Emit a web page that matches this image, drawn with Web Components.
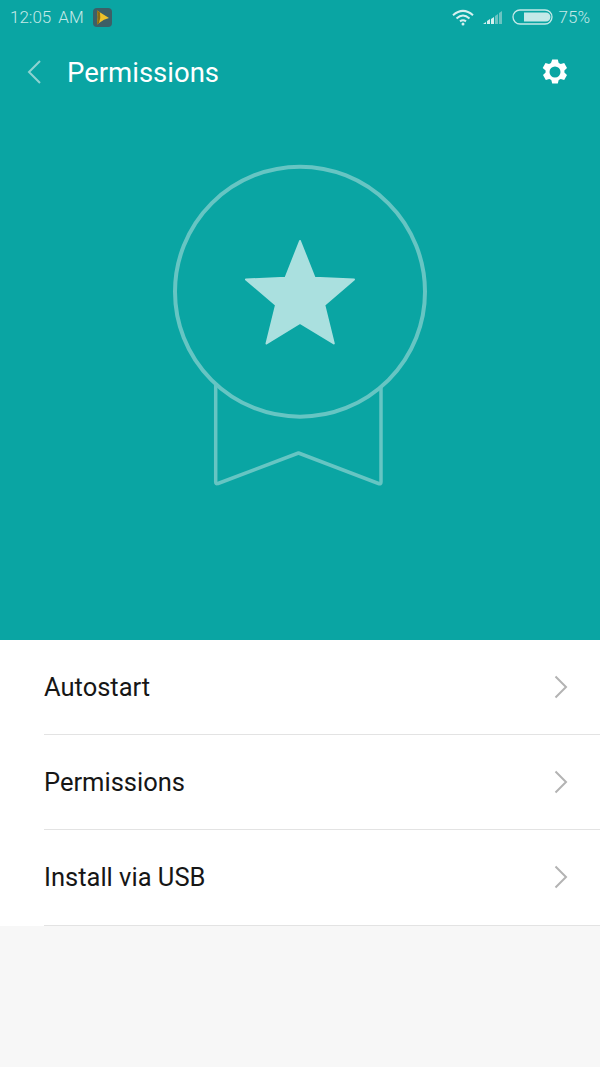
<!DOCTYPE html>
<html><head><meta charset="utf-8">
<style>
html,body{margin:0;padding:0;width:600px;height:1067px;overflow:hidden;background:#f7f7f7;font-family:Roboto,"Liberation Sans",sans-serif}
settings-page{display:block}
</style></head><body>
<settings-page>
  <hero-panel>
    <status-bar slot="status"></status-bar>
    <title-bar slot="title">Permissions</title-bar>
    <medal-art></medal-art>
  </hero-panel>
  <menu-list>
    <menu-row>Autostart</menu-row>
    <menu-row>Permissions</menu-row>
    <menu-row>Install via USB</menu-row>
  </menu-list>
</settings-page>
<script>
function def(name, html){
  customElements.define(name, class extends HTMLElement{
    constructor(){super();this.attachShadow({mode:'open'}).innerHTML=html;}
  });
}
def('settings-page','<style>:host{display:block;width:600px;height:1067px;background:#f7f7f7}</style><slot></slot>');
def('hero-panel',`<style>:host{display:flex;flex-direction:column;height:640px;background:#0aa5a3}</style><slot name="status"></slot><slot name="title"></slot><slot></slot>`);
def('status-bar',`<style>
:host{display:flex;align-items:center;height:34px;padding:0 10px;color:#c4e9e8;font:300 17px Roboto,sans-serif}
.app{margin-left:9px;width:19px;height:19px;border-radius:4px;background:#3d5f66;display:flex;align-items:center;justify-content:center}
.sp{flex:1}
.am{margin-left:7px}
.wifi{margin-right:9px}.sig{margin-right:8px}.bat{margin-right:6px}
svg{display:block}
</style>
<span>12:05</span><span class="am">AM</span>
<span class="app"><svg width="17" height="17" viewBox="0 0 17 17"><path d="M3 1.5 L15 9 Q10 10 5 14 L3 15.5 Q4.500 8 3 1.500Z" fill="#eec22a"/><path d="M3 15.500 Q4.500 8 3 1.500 L6 3.500 Q7 9 5 14Z" fill="#8a6a14"/></svg></span>
<span class="sp"></span>
<svg class="wifi" width="22" height="17" viewBox="0 0 22 17" fill="none" stroke="#d6f0ef" stroke-width="2"><path d="M1 6.200 Q11 -2.500 21 6.200"/><path d="M4.500 9.400 Q11 3.600 17.500 9.400"/><path d="M8 12.400 Q11 10 14 12.400"/><circle cx="11" cy="15" r="1.500" fill="#d6f0ef" stroke="none"/></svg>
<svg class="sig" width="21" height="17" viewBox="0 0 21 17"><path d="M0 15h3v-2zM4 15h3v-5l-3 2zM8 15h3V8L8 10z" fill="#d6f0ef"/><path d="M12 15h3V5l-3 2zM16 15h3V2l-3 2z" fill="#6cc4c2"/></svg>
<svg class="bat" width="41" height="16" viewBox="0 0 41 16"><rect x="1" y="1" width="39" height="14" rx="7" fill="none" stroke="#c4e9e8" stroke-width="1.300"/><path d="M12 3.500h22a4.500 4.500 0 0 1 0 9H12z" fill="#c4e9e8"/></svg>
<span>75%</span>`);
def('title-bar',`<style>
:host{display:flex;align-items:center;height:76px;color:#fff;font:400 27.500px Roboto,sans-serif}
.back{margin-left:27px;margin-right:26px;display:block}
.t{flex:1;margin-top:0}
.gear{margin-right:31px;display:block}
</style>
<svg class="back" width="14" height="24" viewBox="0 0 14 24" fill="none" stroke="#8fd3d1" stroke-width="2"><path d="M13 1 L2 12 L13 23"/></svg>
<span class="t"><slot></slot></span>
<svg class="gear" width="28" height="28" viewBox="0 0 28 28"><path fill="#fff" fill-rule="evenodd" d="M11.200 1.500h5.600l.9 3.500 2 1.100 3.500-1 2.800 4.800-2.600 2.500v2.200l2.600 2.500-2.800 4.800-3.500-1-2 1.100-.9 3.500h-5.600l-.9-3.500-2-1.100-3.500 1-2.800-4.800 2.600-2.500v-2.200L1.700 9.900l2.800-4.800 3.500 1 2-1.100zM14 8.500a5.500 5.500 0 1 0 0 11 5.500 5.500 0 0 0 0-11z"/></svg>`);
def('medal-art',`<style>:host{display:flex;justify-content:center;padding-top:54px}svg{display:block}</style>
<svg width="260" height="326" viewBox="170 164 260 326" fill="none">
<path d="M215.700 383 V482 Q215.700 484.500 218 483.500 L298.500 453 L378.500 483.500 Q381 484.500 381 482 V387" stroke="#66c5c3" stroke-width="3.500" stroke-linejoin="round"/>
<circle cx="300" cy="291.700" r="125" stroke="#66c5c3" stroke-width="4"/>
<path d="M300 241 L314.500 277.700 L354 279.500 L324.300 305 L333.800 343.500 L300 323 L266.500 343.500 L276 305 L246 279.500 L285.600 277.700Z" fill="#aae0df" stroke="#aae0df" stroke-width="2" stroke-linejoin="round"/>
</svg>`);
def('menu-list',`<style>:host{display:flex;flex-direction:column;background:#fff}</style><slot></slot>`);
def('menu-row',`<style>
:host{display:block;padding-left:44px;background:#fff}
.r{display:flex;align-items:center;justify-content:space-between;height:94px;border-bottom:1px solid #e3e3e3;box-sizing:content-box;padding-right:32px;color:#161616;font:400 25.500px Roboto,sans-serif}
:host(:last-child) .r{height:94.500px}
svg{display:block}
</style>
<div class="r"><span><slot></slot></span>
<svg width="14" height="24" viewBox="0 0 14 24" fill="none" stroke="#b3b3b3" stroke-width="2"><path d="M1.500 1.500 L12 12 L1.500 22.500"/></svg></div>`);
</script>
</body></html>
